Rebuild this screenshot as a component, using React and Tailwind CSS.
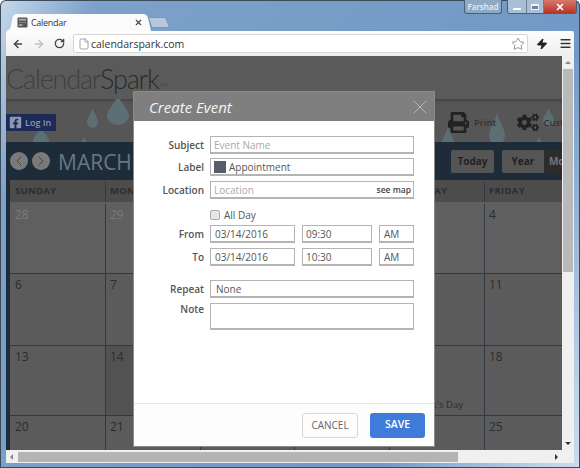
import React from "react";
import { ArrowLeft, ArrowRight, RotateCw, File, Star, Zap, Menu, X, ChevronLeft, ChevronRight } from "lucide-react";
import { FaPrint, FaCogs, FaFacebookSquare } from "react-icons/fa";

const cols = "grid grid-cols-[95px_95px_94px_95px_95px_95px]";
const weeks = [
  { h: "h-[71px]", days: ["28", "29", "", "", "", "4"], faded: true },
  { h: "h-[72px]", days: ["6", "7", "", "", "", "11"] },
  { h: "h-[70px]", days: ["13", "14", "", "", "", "18"], note: true },
  { h: "h-[40px]", days: ["20", "21", "", "", "", "25"] },
];

function Drop({ className }) {
  return (
    <svg viewBox="0 0 20 30" preserveAspectRatio="none" className={"absolute " + className}>
      <path d="M10 0C13 9 20 15 20 21a10 9 0 0 1-20 0C0 15 7 9 10 0Z" fill="#5c6f74" />
    </svg>
  );
}

function Field({ label, children, className = "", labelClass = "leading-[18px]" }) {
  return (
    <div className={"flex " + className}>
      <div className={"w-[76px] pr-[6px] text-right font-semibold text-[10px] text-[#555] " + labelClass}>{label}</div>
      {children}
    </div>
  );
}

const box = "h-[18px] border border-[#b4b4b4] border-b-2 flex items-center pt-[1px] text-[10px] text-[#555] bg-white";

export default function App() {
  return (
    <div className="relative w-[580px] h-[468px] overflow-hidden rounded-t-[6px] font-['Open_Sans',sans-serif] shadow-[inset_0_0_0_1px_#3d4a5a] bg-[linear-gradient(115deg,#c6d9ec_0%,#7da1c9_12%,#7199c5_75%,#bcd3e8_95%,#c9dcee_100%)]">
      {/* title strip */}
      <div className="flex h-[31px] items-end pl-[6px]">
        <div className="relative flex h-[17px] w-[145px] items-center pl-[11px] pr-[8px]">
          <svg className="absolute inset-0 h-full w-full" viewBox="0 0 145 17" preserveAspectRatio="none">
            <path d="M0 17C4 16 5 14 6 6 7 1 8 0 12 0H137C140 0 141 1 142 4L145 17Z" fill="#fbfbfb" />
          </svg>
          <svg viewBox="0 0 12 12" className="relative mr-[3px] h-[11px] w-[11px] shrink-0">
            <rect x="0.5" y="0.5" width="11" height="11" rx="1.5" fill="#555" />
            <rect x="2" y="2" width="8" height="2" fill="#aaa" />
            <rect x="2" y="5.5" width="8" height="1" fill="#888" />
            <rect x="2" y="8" width="4" height="1.5" fill="#bbb" />
          </svg>
          <span className="relative text-[9px] leading-none tracking-[-0.3px] text-[#333]">Calendar</span>
          <X className="relative ml-auto h-[9px] w-[9px] text-[#444]" strokeWidth={3} />
        </div>
        <svg viewBox="0 0 22 11" className="mb-[3px] ml-[-3px] h-[11px] w-[22px]">
          <path d="M0.5 0.5H15C17 0.5 18 1 19 4L21.5 10.5H6C4 10.5 3.5 10 3 8Z" fill="#b5c8de" stroke="#7d95b3" />
        </svg>
      </div>

      {/* window controls */}
      <div className="absolute right-[3px] top-0 flex items-start">
        <div className="mr-[5px] flex h-[14px] w-[38px] items-center justify-center rounded-b-[3px] border border-t-0 border-[#4b5d74] bg-[#8fa8c4] text-[8px] font-semibold leading-none text-[#e8eef5]">Farshad</div>
        <div className="flex h-[14px] overflow-hidden rounded-b-[3px] border border-t-0 border-[#4b5d74]">
          <div className="flex w-[18px] items-end justify-center bg-[#a9bfd6] pb-[3px]"><div className="h-[2px] w-[8px] bg-white" /></div>
          <div className="flex w-[18px] items-center justify-center border-x border-[#6b7f97] bg-[#a9bfd6]"><div className="h-[6px] w-[8px] border border-t-2 border-[#f2f2f2] bg-[#6f8298]" /></div>
          <div className="flex w-[32px] items-center justify-center bg-[linear-gradient(#d9786c,#b53526)]"><X className="h-[10px] w-[10px] text-white" strokeWidth={4} /></div>
        </div>
      </div>

      {/* toolbar */}
      <div className="mx-[6px] flex h-[25px] items-center rounded-t-[2px] bg-[linear-gradient(#fdfdfd,#eeeeee)]">
        <ArrowLeft className="ml-[6px] h-[12px] w-[12px] text-[#444]" strokeWidth={3} />
        <ArrowRight className="ml-[9px] h-[12px] w-[12px] text-[#c2c2c2]" strokeWidth={3} />
        <RotateCw className="ml-[9px] h-[11px] w-[11px] text-[#444]" strokeWidth={3} />
        <div className="ml-[8px] flex h-[19px] w-[455px] items-center rounded-[2px] border border-[#d6d6d6] bg-white pl-[4px]">
          <File className="h-[12px] w-[12px] text-[#8a8a8a]" strokeWidth={1.5} />
          <span className="ml-[1px] pt-[1px] text-[10.5px] leading-none text-[#333]">calendarspark.com</span>
          <Star className="ml-auto mr-[2px] h-[14px] w-[14px] text-[#888]" strokeWidth={1.5} />
        </div>
        <Zap className="ml-[8px] h-[12px] w-[12px] fill-[#222] text-[#222]" />
        <Menu className="ml-[11px] h-[13px] w-[13px] text-[#333]" strokeWidth={3} />
      </div>

      {/* viewport */}
      <div className="relative mx-[6px] flex h-[394px]">
        <div className="h-full w-[556px] shrink-0 overflow-hidden bg-[#1e2c39]">
          <div className="flex h-[43px] items-start bg-[#5a5a5a] pt-[3px] font-['Lato',sans-serif] text-[27px] font-light leading-[40px] tracking-[-1.2px]">
            <span className="text-[#404040]">Calendar</span>
            <span className="text-[#2a2a2a]">Spark</span>
            <span className="mt-[24px] ml-[1px] text-[5px] leading-none tracking-normal text-[#333]">TM</span>
          </div>
          <div className="relative flex h-[43px] items-start overflow-hidden bg-[#565656] shadow-[inset_0_3px_3px_-1px_#444]">
            <Drop className="left-[81px] top-[9px] h-[20px] w-[11px]" />
            <Drop className="left-[101px] top-[-4px] h-[30px] w-[22px]" />
            <Drop className="left-[27px] top-[28px] h-[20px] w-[16px]" />
            <Drop className="left-[74px] top-[38px] h-[12px] w-[8px]" />
            <Drop className="left-[436px] top-[28px] h-[22px] w-[12px]" />
            <Drop className="left-[483px] top-[14px] h-[32px] w-[16px]" />
            <Drop className="left-[537px] top-[9px] h-[18px] w-[11px]" />
            <Drop className="left-[529px] top-[38px] h-[12px] w-[8px]" />
            <div className="relative mt-[15px] flex h-[17px] w-[50px] shrink-0 items-center rounded-[1px] bg-[#1d2a57] pl-[3px]">
              <FaFacebookSquare className="h-[13px] w-[13px] text-[#8d97b2]" />
              <span className="ml-[3px] whitespace-nowrap text-[9px] font-semibold leading-none text-[#8d97b2]">Log In</span>
            </div>
            <div className="relative ml-[392px] mt-[13px] flex shrink-0 items-center">
              <FaPrint className="h-[21px] w-[21px] text-[#222]" />
              <span className="ml-[5px] text-[9.5px] font-semibold leading-none text-[#333]">Print</span>
              <FaCogs className="ml-[21px] h-[21px] w-[22px] text-[#222]" />
              <span className="ml-[4px] whitespace-nowrap text-[9.5px] font-semibold leading-none text-[#333]">Customize</span>
            </div>
          </div>
          <div className="flex h-[38px] w-[580px] items-center pl-[4px] pr-[4px]">
            <div className="flex h-[18px] w-[18px] items-center justify-center rounded-full bg-[#7a7a7a]"><ChevronLeft className="h-[16px] w-[16px] text-[#444]" strokeWidth={1.5} /></div>
            <div className="ml-[4px] flex h-[18px] w-[18px] items-center justify-center rounded-full bg-[#7a7a7a]"><ChevronRight className="h-[16px] w-[16px] text-[#444]" strokeWidth={1.5} /></div>
            <span className="ml-[8px] pt-[3px] text-[21px] leading-none text-[#6a7883]">MARCH 2016</span>
            <div className="ml-auto flex h-[23px] w-[43px] items-center justify-center rounded-[2px] bg-[#555] text-[10px] font-bold text-[#222]">Today</div>
            <div className="ml-[8px] flex h-[23px] w-[80px] overflow-hidden rounded-[2px] bg-[#555]">
              <div className="flex w-[44px] items-center justify-center text-[10px] font-bold text-[#222]">Year</div>
              <div className="flex flex-1 items-center bg-[#2c2c2c] pl-[5px] text-[10px] font-bold text-[#777]">Month</div>
            </div>
          </div>
          <div className="ml-[4px] w-[569px] bg-[#5b5b5b]">
            <div className={cols + " h-[22px] bg-[#4c4c4c] pt-[1px] text-[9.5px] font-bold tracking-[0.3px] text-[#2d2d2d]"}>
              {["SUNDAY", "MONDAY", "TUESDAY", "WEDNESDAY", "THURSDAY", "FRIDAY"].map((d, i) => (
                <div key={d} className={"flex items-center " + (i ? "border-l border-[#2f3a45] pl-[4px]" : "pl-[5px]")}>{d}</div>
              ))}
            </div>
            {weeks.map((w) => (
              <div key={w.days[0]} className={cols + " " + w.h + (w.faded ? " bg-[#5f5f5f] pt-[2px]" : " border-t border-[#2f3a45]")}>
                {w.days.map((d, i) => (
                  <div key={i} className={"relative pl-[4px] pt-[2px] text-[12px] leading-[18px] " + (i ? "border-l border-[#2f3a45] " : "pl-[5px] ") + (d === "14" ? "bg-[#525252] " : "") + (w.faded && i < 2 ? "text-[#7b7b7b]" : "text-[#2c2c2c]")}>
                    {d}
                    {w.note && i === 4 && <span className="absolute bottom-[6px] right-[21px] whitespace-nowrap text-[9.5px] leading-none text-[#2c2c2c]">St. Patrick's Day</span>}
                  </div>
                ))}
              </div>
            ))}
          </div>
        </div>

        {/* vertical scrollbar */}
        <div className="flex h-full w-[12px] flex-col items-center bg-[#f0f0f0]">
          <div className="mt-[5px] h-0 w-0 border-x-[3px] border-b-[3px] border-x-transparent border-b-[#888]" />
          <div className="mt-[5px] h-[203px] w-[10px] bg-[#b9b9b9]" />
          <div className="mb-[5px] mt-auto h-0 w-0 border-x-[3px] border-t-[3px] border-x-transparent border-t-[#333]" />
        </div>

        {/* modal */}
        <div className="absolute left-[128px] top-[36px] flex h-[354px] w-[300px] flex-col bg-white shadow-[0_0_0_1px_#8a8a8a]">
          <div className="flex h-[29px] items-center justify-between bg-[#7f7f7f] pl-[15px] pr-[7px]">
            <span className="pt-[1px] text-[15px] italic leading-none text-[#f4f4f4]">Create Event</span>
            <svg viewBox="0 0 14 14" className="h-[14px] w-[14px]">
              <path d="M0.5 0.5L13.5 13.5M13.5 0.5L0.5 13.5" stroke="#b5b5b5" strokeWidth="1" fill="none" />
            </svg>
          </div>
          <div className="flex flex-1 flex-col pt-[15px]">
            <Field label="Subject" className="mb-[4px]">
              <div className={box + " w-[204px] pl-[3px] text-[#aaa]"}>Event Name</div>
            </Field>
            <Field label="Label" className="mb-[5px]">
              <div className={box + " w-[204px] pl-[3px]"}>
                <span className="mr-[3px] h-[12px] w-[12px] bg-[#565d6b]" />Appointment
              </div>
            </Field>
            <Field label="Location" className="mb-[10px]">
              <div className={box + " w-[204px] pl-[3px] text-[#aaa]"}>
                Location
                <span className="ml-auto pr-[2px] text-[8.5px] font-semibold text-[#444]">see map</span>
              </div>
            </Field>
            <div className="mb-[4px] ml-[76px] flex h-[12px] items-center">
              <span className="h-[10px] w-[10px] rounded-[2px] border border-[#aaa] bg-[#e6e6e6]" />
              <span className="ml-[4px] text-[10px] leading-none text-[#555]">All Day</span>
            </div>
            {[["From", "09:30"], ["To", "10:30"]].map(([l, t]) => (
              <Field key={l} label={l} className="mb-[5px]">
                <div className={box + " w-[85px] pl-[4px] text-[10.5px]"}>03/14/2016</div>
                <div className={box + " ml-[7px] w-[70px] pl-[3px] pt-[2px] text-[10.5px]"}>{t}</div>
                <div className={box + " ml-[7px] w-[35px] pl-[4px] text-[10.5px]"}>AM</div>
              </Field>
            ))}
            <Field label="Repeat" className="mb-[5px] mt-[9px]">
              <div className={box + " w-[204px] pl-[5px]"}>None</div>
            </Field>
            <Field label="Note" labelClass="leading-[13px]">
              <div className="h-[27px] w-[204px] border border-b-2 border-[#b4b4b4]" />
            </Field>
          </div>
          <div className="flex h-[43px] items-center justify-end gap-[12px] border-t border-[#e6e6e6] bg-[#fdfdfd] pr-[9px]">
            <div className="flex h-[25px] w-[56px] items-center justify-center rounded-[3px] border border-[#d8d8d8] text-[10px] text-[#666]">CANCEL</div>
            <div className="flex h-[25px] w-[55px] items-center justify-center rounded-[3px] bg-[#3f7bd8] text-[10.5px] font-semibold text-white">SAVE</div>
          </div>
        </div>
      </div>

      {/* horizontal scrollbar */}
      <div className="mx-[6px] flex h-[13px] items-center bg-[#f0f0f0]">
        <div className="ml-[4px] h-0 w-0 border-y-[3px] border-r-[3px] border-y-transparent border-r-[#888]" />
        <div className="ml-[5px] h-[10px] w-[440px] bg-[#b4b4b4]" />
        <div className="ml-auto mr-[16px] h-0 w-0 border-y-[3px] border-l-[3px] border-y-transparent border-l-[#333]" />
      </div>
    </div>
  );
}
